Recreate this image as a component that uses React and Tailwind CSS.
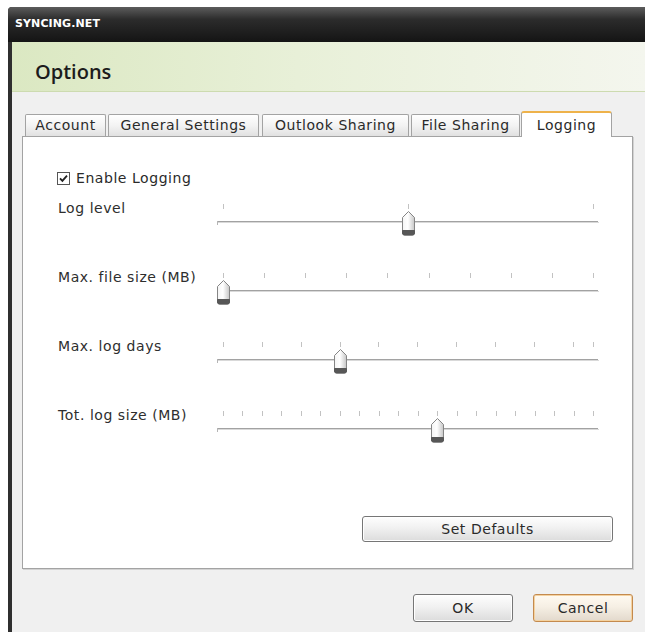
import React from "react";

const BODY = "font-['DejaVu_Sans',sans-serif]";
const TEXT = "text-[14px] tracking-[0.55px]";

function range(start, end, count) {
  const step = (end - start) / (count - 1);
  return Array.from({ length: count }, (_, i) => start + step * i);
}

// Trackbar drawn as a small vector widget: tick marks, groove and thumb.
function Trackbar({ id, ticks, thumb }) {
  const cx = Math.round(thumb) + 0.5;
  return (
    <svg width="384" height="36" viewBox="0 0 384 36" className="block mt-[2px]">
      <defs>
        <linearGradient id={`thumb-${id}`} x1="0" x2="1" y1="0" y2="0">
          <stop offset="0" stopColor="#f4f4f4" />
          <stop offset="0.45" stopColor="#ffffff" />
          <stop offset="1" stopColor="#c6c6c6" />
        </linearGradient>
      </defs>
      {ticks.map((t, i) => (
        <line
          key={i}
          x1={Math.round(t) + 0.5}
          x2={Math.round(t) + 0.5}
          y1="2"
          y2="7"
          stroke="#c2c2c2"
          strokeWidth="1"
        />
      ))}
      {/* groove */}
      <line x1="0.5" x2="381" y1="19.5" y2="19.5" stroke="#a2a2a2" strokeWidth="1" />
      <line x1="1" x2="382" y1="20.5" y2="20.5" stroke="#d9d9d9" strokeWidth="1" />
      <line x1="0.5" x2="0.5" y1="19" y2="23" stroke="#b5b5b5" strokeWidth="1" />
      {/* thumb */}
      <path
        d={`M${cx - 6} 15.5 L${cx} 9.5 L${cx + 6} 15.5 L${cx + 6} 31 Q${cx + 6} 33 ${cx + 4} 33 L${cx - 4} 33 Q${cx - 6} 33 ${cx - 6} 31 Z`}
        fill={`url(#thumb-${id})`}
        stroke="#858585"
        strokeWidth="1"
      />
      <path
        d={`M${cx - 6} 28.5 L${cx + 6} 28.5 L${cx + 6} 31 Q${cx + 6} 33 ${cx + 4} 33 L${cx - 4} 33 Q${cx - 6} 33 ${cx - 6} 31 Z`}
        fill="#575757"
        stroke="#575757"
        strokeWidth="1"
      />
    </svg>
  );
}

const logDayTicks = [...range(6, 355.6, 10), 376];
const totalTicks = range(6, 376, 20);

const rows = [
  { id: "level", label: "Log level", ticks: range(6, 376, 3), thumb: 191 },
  { id: "size", label: "Max. file size (MB)", ticks: range(6, 376, 10), thumb: 6 },
  { id: "days", label: "Max. log days", ticks: logDayTicks, thumb: logDayTicks[3] },
  { id: "total", label: "Tot. log size (MB)", ticks: totalTicks, thumb: totalTicks[11] },
];

const tabs = [
  { label: "Account", w: "w-[81px]", ml: "ml-0" },
  { label: "General Settings", w: "w-[151px]", ml: "ml-[2px]" },
  { label: "Outlook Sharing", w: "w-[147px]", ml: "ml-[3px]" },
  { label: "File Sharing", w: "w-[109px]", ml: "ml-[2px]" },
];

function Button({ children, className }) {
  return (
    <button
      type="button"
      className={`flex items-center justify-center rounded-[3px] border border-[#767676] bg-[linear-gradient(#fefefe,#f1f1f1_45%,#dcdcdc)] ${TEXT} text-[#2a2a2a] shadow-[inset_0_0_0_1px_#ffffff] ${className}`}
    >
      {children}
    </button>
  );
}

export default function App() {
  return (
    <div className={`w-[645px] h-[632px] bg-white pt-[7px] pl-[8px] overflow-hidden ${BODY}`}>
      <div className="flex flex-col h-full border-l-[4px] border-[#2f2f2f] bg-[#f0f0f0] rounded-tl-[4px]">
        {/* title bar */}
        <div className="h-[35px] flex items-center -ml-[4px] pl-[7px] rounded-tl-[4px] bg-[linear-gradient(#5c5c5c,#2c2c2c_35%,#141414)]">
          <span className="text-[11px] font-bold text-white tracking-[0.1px]">SYNCING.NET</span>
        </div>

        {/* header */}
        <div className="h-[50px] pl-[23px] pt-[16px] border-b border-[#cddbb0] bg-[linear-gradient(90deg,#dbe8c2,#e8f0d8_45%,#f4f6ee)]">
          <span className="block font-['Open_Sans',sans-serif] font-semibold text-[20px] leading-[27px] text-[#1c1c1c]">
            Options
          </span>
        </div>

        {/* tab strip */}
        <div className="mt-[19px] ml-[13px] h-[25px] flex items-end">
          {tabs.map((t) => (
            <div
              key={t.label}
              className={`${t.w} ${t.ml} h-[22px] flex items-center justify-center border border-b-0 border-[#a3a3a3] rounded-t-[2px] bg-[linear-gradient(#ffffff,#f3f3f3_50%,#e1e1e1)] ${TEXT} text-[#2a2a2a]`}
            >
              {t.label}
            </div>
          ))}
          <div className={`relative z-10 w-[91px] ml-px h-[26px] -mb-px flex items-start justify-center pt-[2px] border border-b-0 border-[#a3a3a3] border-t-2 border-t-[#eeb24a] rounded-t-[3px] bg-white ${TEXT} text-[#2a2a2a]`}>
            Logging
          </div>
        </div>

        {/* tab page */}
        <div className="ml-[10px] w-[611px] h-[433px] flex flex-col border border-[#a3a3a3] bg-white shadow-[1px_1px_0_#d2d2d2] pl-[35px] pt-[33px] pb-[26px]">
          <div className={`flex items-center h-[17px] ${TEXT} text-[#2a2a2a]`}>
            <svg width="13" height="13" viewBox="0 0 13 13" className="-ml-px mr-[6px]">
              <rect x="0.5" y="0.5" width="12" height="12" fill="#fff" stroke="#555" />
              <path d="M3 6.3 L5.4 8.9 L10 3.6" fill="none" stroke="#222" strokeWidth="1.8" />
            </svg>
            <span className="leading-[17px]">Enable Logging</span>
          </div>

          <div className="mt-[13px] flex flex-col">
            {rows.map((r) => (
              <div key={r.id} className="h-[69px] flex items-start">
                <span className={`w-[159px] ${TEXT} leading-[17px] text-[#2e2e2e]`}>{r.label}</span>
                <Trackbar id={r.id} ticks={r.ticks} thumb={r.thumb} />
              </div>
            ))}
          </div>

          <Button className="mt-auto self-end mr-[19px] w-[251px] h-[26px]">Set Defaults</Button>
        </div>

        {/* dialog buttons */}
        <div className="mt-[25px] flex justify-end gap-[20px] pr-[12px]">
          <Button className="w-[100px] h-[28px]">OK</Button>
          <button
            type="button"
            className={`flex items-center justify-center w-[100px] h-[28px] rounded-[3px] border border-[#c48a4e] bg-[linear-gradient(#fffaf1,#f6efe4_45%,#e2d9cc)] shadow-[inset_0_0_0_1px_#f4d2a0] ${TEXT} text-[#2a2a2a]`}
          >
            Cancel
          </button>
        </div>
      </div>
    </div>
  );
}
